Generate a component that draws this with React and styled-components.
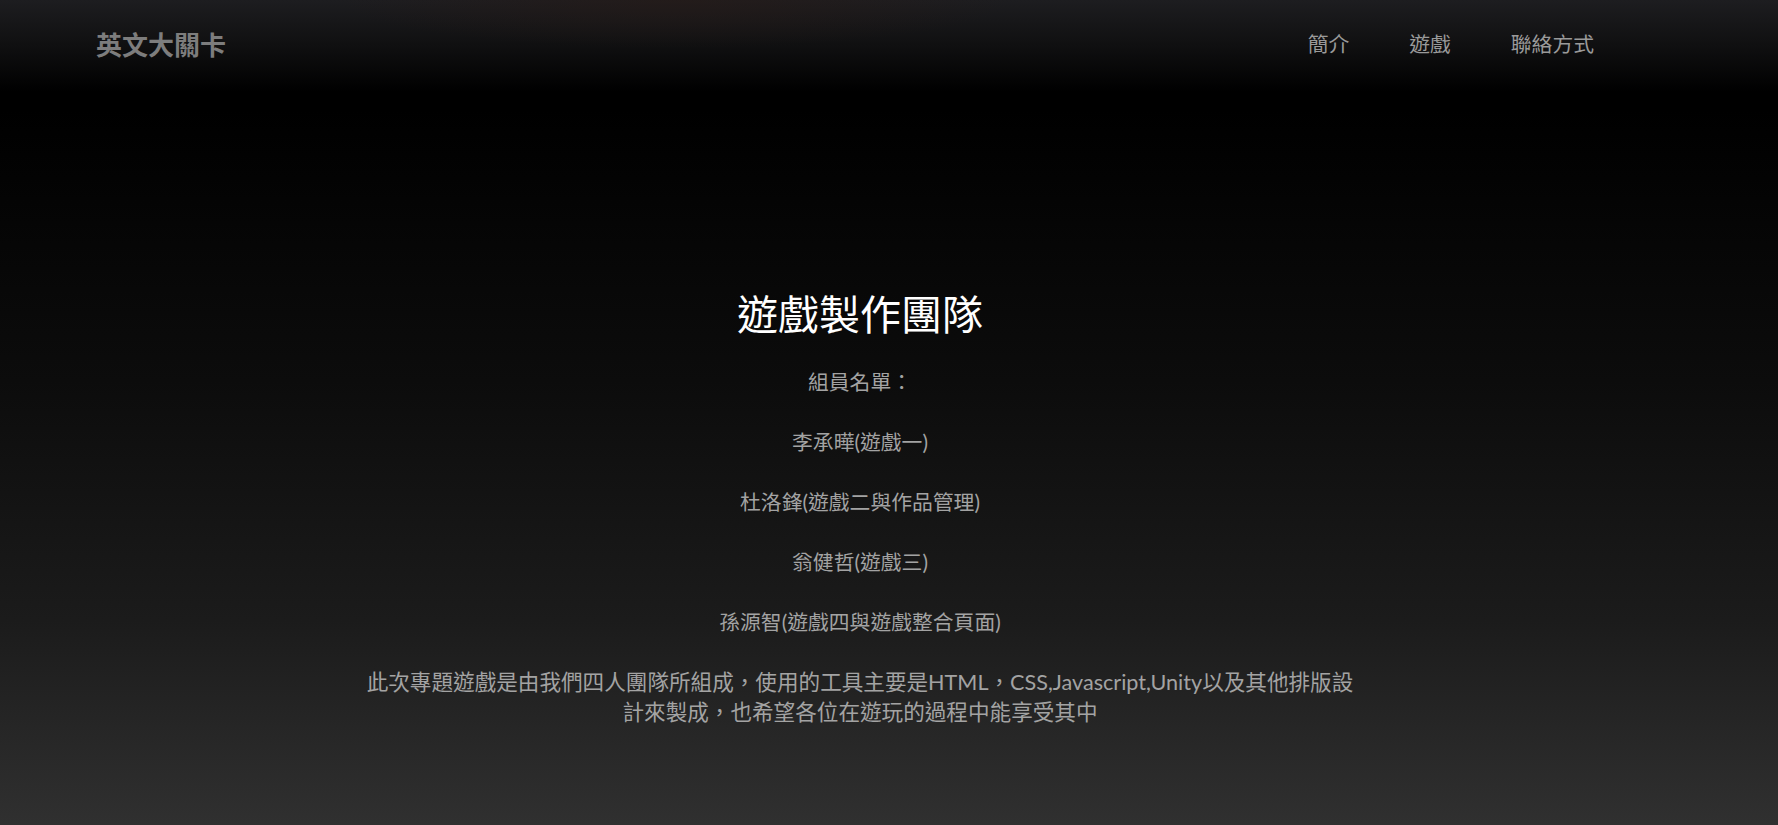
import React from "react";
import styled, { createGlobalStyle } from "styled-components";

const GlobalStyle = createGlobalStyle`
  html, body { margin: 0; padding: 0; }
  body {
    background: #000;
    font-family: "Lato", "Noto Sans CJK TC", sans-serif;
  }
`;

const Page = styled.div`
  min-height: 100vh;
  display: flex;
  flex-direction: column;
  background: linear-gradient(to bottom, #000 0px, #000 110px, #0c0c0c 380px, #1b1b1b 620px, #303030 100%);
`;

const Header = styled.header`
  height: 86px;
  display: flex;
  align-items: center;
  justify-content: space-between;
  padding: 0 184px 6px 96px;
  background:
    radial-gradient(ellipse 420px 60px at 38% 0%, rgba(40, 26, 22, 0.55), transparent 80%),
    linear-gradient(to bottom, #1d1d20 0%, #111112 45%, #000 100%);
`;

const Logo = styled.div`
  font-family: "Noto Sans CJK TC", sans-serif;
  font-size: 26px;
  font-weight: 700;
  color: #7d7d7d;
`;

const Nav = styled.nav`
  display: flex;
  gap: 60px;
`;

const NavLink = styled.a`
  font-family: "Noto Sans CJK TC", sans-serif;
  font-size: 20.8px;
  color: #9a9a9a;
  text-decoration: none;
  cursor: pointer;
`;

const Main = styled.main`
  flex: 1;
  display: flex;
  flex-direction: column;
  align-items: center;
  padding: 196px 58px 60px 0;
  text-align: center;
`;

const Title = styled.h1`
  margin: 0 0 31px;
  font-family: "Noto Sans CJK TC", sans-serif;
  font-size: 41px;
  line-height: 48px;
  font-weight: 400;
  color: #fff;
`;

const Line = styled.p`
  margin: 0 0 30px;
  font-size: ${(p) => (p.$wide ? "21.6px" : "20.8px")};
  line-height: 30px;
  color: #a3a3a3;
  max-width: ${(p) => (p.$wide ? "1000px" : "none")};
`;

const members = [
  "組員名單：",
  "李承曄(遊戲一)",
  "杜洛鋒(遊戲二與作品管理)",
  "翁健哲(遊戲三)",
  "孫源智(遊戲四與遊戲整合頁面)",
];

export default function App() {
  return (
    <>
      <GlobalStyle />
      <Page>
        <Header>
          <Logo>英文大關卡</Logo>
          <Nav>
            <NavLink>簡介</NavLink>
            <NavLink>遊戲</NavLink>
            <NavLink>聯絡方式</NavLink>
          </Nav>
        </Header>
        <Main>
          <Title>遊戲製作團隊</Title>
          {members.map((m) => (
            <Line key={m}>{m}</Line>
          ))}
          <Line $wide>
            此次專題遊戲是由我們四人團隊所組成，使用的工具主要是HTML，CSS,Javascript,Unity以及其他排版設計來製成，也希望各位在遊玩的過程中能享受其中
          </Line>
        </Main>
      </Page>
    </>
  );
}
